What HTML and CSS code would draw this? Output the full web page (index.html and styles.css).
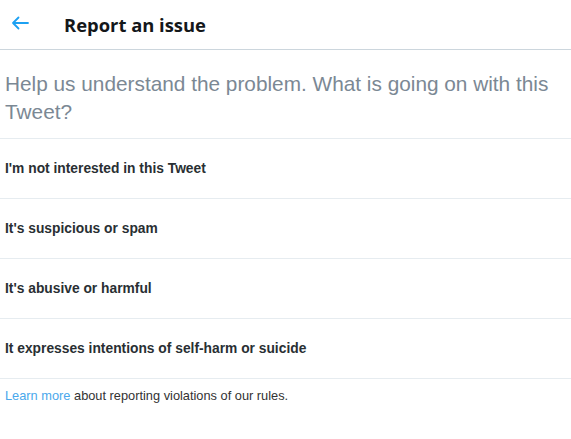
FILE: index.html
```html
<!DOCTYPE html>
<html>
<head>
<meta charset="utf-8">
<link rel="stylesheet" href="styles.css">
</head>
<body>
<div class="header">
  <span class="back">
    <svg width="18" height="14" viewBox="0 0 18 14"><path d="M17 7H2M7.5 1.5L2 7l5.5 5.5" fill="none" stroke="#1da1f2" stroke-width="1.8" stroke-linecap="round" stroke-linejoin="round"/></svg>
  </span>
  <h1 class="title">Report an issue</h1>
</div>
<div class="question">Help us understand the problem. What is going on with this Tweet?</div>
<ul class="options">
  <li class="option">I'm not interested in this Tweet</li>
  <li class="option">It's suspicious or spam</li>
  <li class="option">It's abusive or harmful</li>
  <li class="option">It expresses intentions of self-harm or suicide</li>
</ul>
<p class="footer"><a class="link">Learn more</a> about reporting violations of our rules.</p>
</body>
</html>
```
FILE: styles.css
```css
html, body { margin: 0; padding: 0; background: #fff; }
body { font-family: "Liberation Sans", Arial, sans-serif; color: #14171a; }
.header {
  height: 49px;
  border-bottom: 1px solid #ccd6dd;
  display: flex;
  align-items: center;
}
.back { width: 64px; display: flex; padding-left: 11px; box-sizing: border-box; margin-top: -3px; }
.back svg { display: block; }
.title { margin: 0; font-size: 18.4px; font-weight: 700; font-family: "Open Sans", "Liberation Sans", sans-serif; color: #14171a; }
.question {
  padding: 20px 5px 12px;
  font-size: 20.8px;
  line-height: 28px;
  color: #7b8894;
  border-bottom: 1px solid #e6ecf0;
}
.options { list-style: none; margin: 0; padding: 0; }
.option {
  height: 59px;
  display: flex;
  align-items: center;
  padding: 0 5px;
  font-size: 13.8px;
  font-weight: 700;
  color: #292f33;
  border-bottom: 1px solid #e6ecf0;
}
.footer { margin: 0; padding: 9px 5px; font-size: 12.8px; color: #333; }
.link { color: #4aa8ec; text-decoration: none; }
```
